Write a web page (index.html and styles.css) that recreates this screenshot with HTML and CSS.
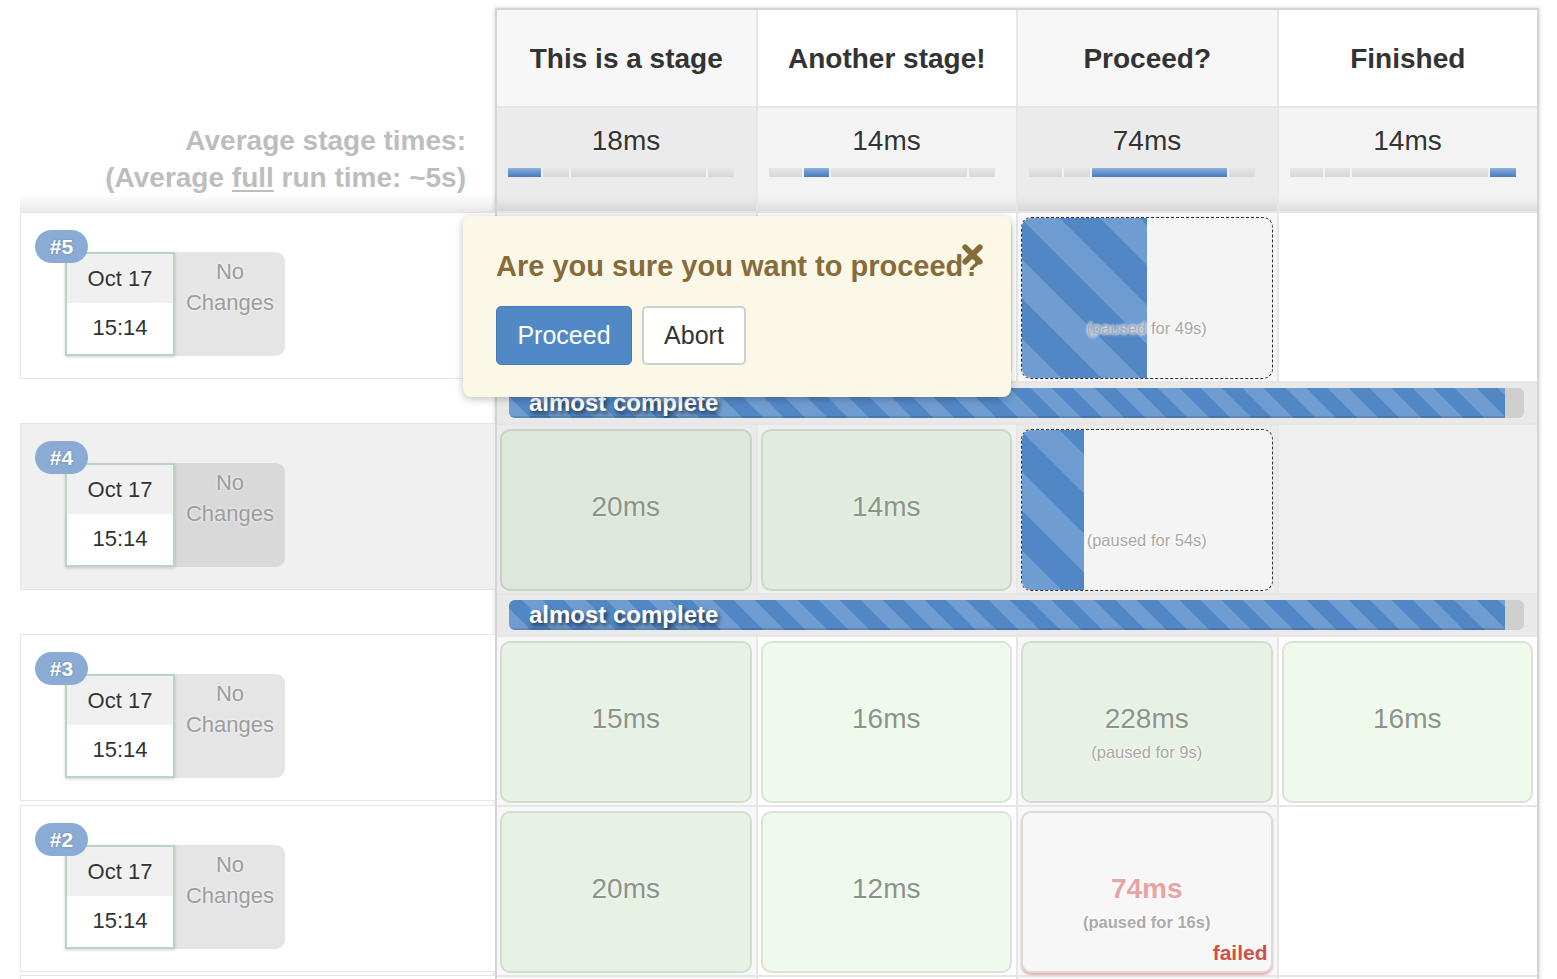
FILE: index.html
```html
<!DOCTYPE html>
<html>
<head>
<meta charset="utf-8">
<title>Stage View</title>
<link rel="stylesheet" href="styles.css">
</head>
<body>
<div class="view">
  <div class="left">
    <div class="avg-label">Average stage times:<br>(Average <u>full</u> run time: ~5s)</div>

    <div class="build">
      <span class="badge">#5</span>
      <div class="stamp">
        <div class="date"><div class="day">Oct 17</div><div class="time">15:14</div></div>
        <div class="changes">No<br>Changes</div>
      </div>
    </div>
    <div class="gap-tall"></div>

    <div class="build hover">
      <span class="badge">#4</span>
      <div class="stamp">
        <div class="date"><div class="day">Oct 17</div><div class="time">15:14</div></div>
        <div class="changes">No<br>Changes</div>
      </div>
    </div>
    <div class="gap-tall"></div>

    <div class="build">
      <span class="badge">#3</span>
      <div class="stamp">
        <div class="date"><div class="day">Oct 17</div><div class="time">15:14</div></div>
        <div class="changes">No<br>Changes</div>
      </div>
    </div>
    <div class="gap-small"></div>

    <div class="build">
      <span class="badge">#2</span>
      <div class="stamp">
        <div class="date"><div class="day">Oct 17</div><div class="time">15:14</div></div>
        <div class="changes">No<br>Changes</div>
      </div>
    </div>
    <div class="gap-tiny"></div>
    <div class="build"></div>
  </div>

  <div class="stages">
    <div class="hcell odd">This is a stage</div>
    <div class="hcell">Another stage!</div>
    <div class="hcell odd">Proceed?</div>
    <div class="hcell">Finished</div>

    <div class="acell odd">
      <div class="avg-time">18ms</div>
      <div class="mini"><span class="seg on" style="flex-grow:18"></span><span class="seg" style="flex-grow:14"></span><span class="seg" style="flex-grow:74"></span><span class="seg" style="flex-grow:14"></span></div>
    </div>
    <div class="acell">
      <div class="avg-time">14ms</div>
      <div class="mini"><span class="seg" style="flex-grow:18"></span><span class="seg on" style="flex-grow:14"></span><span class="seg" style="flex-grow:74"></span><span class="seg" style="flex-grow:14"></span></div>
    </div>
    <div class="acell odd">
      <div class="avg-time">74ms</div>
      <div class="mini"><span class="seg" style="flex-grow:18"></span><span class="seg" style="flex-grow:14"></span><span class="seg on" style="flex-grow:74"></span><span class="seg" style="flex-grow:14"></span></div>
    </div>
    <div class="acell">
      <div class="avg-time">14ms</div>
      <div class="mini"><span class="seg" style="flex-grow:18"></span><span class="seg" style="flex-grow:14"></span><span class="seg" style="flex-grow:74"></span><span class="seg on" style="flex-grow:14"></span></div>
    </div>

    <!-- build #5 -->
    <div class="cell odd"><div class="box ok"><div class="t">18ms</div></div></div>
    <div class="cell"><div class="box ok"><div class="t">14ms</div></div></div>
    <div class="cell odd"><div class="box run"><div class="fill" style="width:50%"></div><div class="p">(paused for 49s)</div></div></div>
    <div class="cell"></div>

    <div class="prow"><div class="bar"><div class="bar-fill" style="width:98.1%">almost complete</div></div></div>

    <!-- build #4 -->
    <div class="cell odd hover"><div class="box ok"><div class="t">20ms</div></div></div>
    <div class="cell hover"><div class="box ok"><div class="t">14ms</div></div></div>
    <div class="cell odd hover"><div class="box run"><div class="fill" style="width:25%"></div><div class="p">(paused for 54s)</div></div></div>
    <div class="cell hover"></div>

    <div class="prow"><div class="bar"><div class="bar-fill" style="width:98.1%">almost complete</div></div></div>

    <!-- build #3 -->
    <div class="cell odd"><div class="box ok"><div class="t">15ms</div></div></div>
    <div class="cell"><div class="box ok"><div class="t">16ms</div></div></div>
    <div class="cell odd"><div class="box ok"><div class="t">228ms</div><div class="p">(paused for 9s)</div></div></div>
    <div class="cell"><div class="box ok"><div class="t">16ms</div></div></div>

    <!-- build #2 -->
    <div class="cell odd"><div class="box ok"><div class="t">20ms</div></div></div>
    <div class="cell"><div class="box ok"><div class="t">12ms</div></div></div>
    <div class="cell odd"><div class="box fail"><div class="t">74ms</div><div class="p">(paused for 16s)</div><span class="failed">failed</span></div></div>
    <div class="cell"></div>

    <!-- build #1 -->
    <div class="cell odd"><div class="box ok"></div></div>
    <div class="cell"><div class="box ok"></div></div>
    <div class="cell odd"><div class="box ok"></div></div>
    <div class="cell"><div class="box ok"></div></div>
  </div>

  <div class="popup">
    <h2 class="popup-title">Are you sure you want to proceed?</h2>
    <svg class="close" viewBox="0 0 24 24" width="25" height="25"><path d="M5 5 L19 19 M19 5 L5 19" stroke="#866b3b" stroke-width="5.5" stroke-linecap="round" fill="none"/></svg>
    <div class="actions">
      <button class="btn btn-primary">Proceed</button>
      <button class="btn btn-default">Abort</button>
    </div>
  </div>
</div>
</body>
</html>
```

FILE: styles.css
```css
* { box-sizing: border-box; }
html, body { margin: 0; padding: 0; background: #fff; }
body { font-family: "Liberation Sans", Arial, Helvetica, sans-serif; color: #333; }

.view {
  position: relative;
  display: flex;
  align-items: flex-start;
  width: 1557px;
  height: 979px;
  padding: 8px 0 0 20px;
  overflow: hidden;
}

/* ---------- left column ---------- */
.left {
  width: 475px;
  flex: none;
  padding-top: 100px;
  display: flex;
  flex-direction: column;
}
.avg-label {
  height: 104px;
  padding: 14px 29px 0 0;
  text-align: right;
  font-weight: bold;
  font-size: 28px;
  line-height: 37px;
  color: #bdbdbd;
  background: linear-gradient(to bottom, #fff 0, #fff 86px, #e9e9e9 104px);
}
.avg-label u { text-decoration-thickness: 2px; text-underline-offset: 3px; }

.build {
  position: relative;
  height: 167px;
  flex: none;
  border: 1px solid #e6e6e6;
  border-right: 0;
  padding: 39px 0 0 44px;
  background: #fff;
}
.build.hover { background: #f0f0f0; border-color: #e4e4e4; }
.gap-tall { height: 44px; flex: none; }
.gap-small { height: 4px; flex: none; }
.gap-tiny { height: 3px; flex: none; }

.badge {
  position: absolute;
  left: 14px;
  top: 17px;
  width: 53px;
  height: 33px;
  border-radius: 17px;
  background: #8aabd3;
  color: #fff;
  font-weight: bold;
  font-size: 21px;
  line-height: 33px;
  text-align: center;
  text-shadow: 0 0 2px rgba(0,0,0,.25);
  z-index: 2;
}
.stamp { display: flex; }
.date {
  width: 110px;
  height: 104px;
  border: 2px solid #b8d4c2;
  box-shadow: 0 1px 3px rgba(0,0,0,.18);
  font-size: 22px;
  text-align: center;
  color: #333;
  display: flex;
  flex-direction: column;
  background: #fff;
  position: relative;
  z-index: 1;
}
.day { height: 49px; line-height: 50px; background: #f0f0f0; text-shadow: 0 0 3px #fff; }
.time { flex: 1; line-height: 50px; }
.changes {
  width: 110px;
  height: 104px;
  background: #e5e5e5;
  border-radius: 0 9px 9px 0;
  color: #9c9c9c;
  font-size: 22px;
  line-height: 31px;
  text-align: center;
  padding-top: 4px;
  text-shadow: 0 0 3px #fff;
}
.build.hover .changes { background: #d9d9d9; }

/* ---------- stage table ---------- */
.stages {
  width: 1044px;
  flex: none;
  display: grid;
  grid-template-columns: repeat(4, 1fr);
  gap: 2px;
  background: #e6e6e6;
  border: 2px solid #d4d4d4;
  border-bottom: 0;
  box-shadow: 0 0 4px rgba(0,0,0,.2);
}
.hcell {
  height: 96px;
  display: flex;
  align-items: center;
  justify-content: center;
  padding-top: 2px;
  font-weight: bold;
  font-size: 28px;
  color: #333;
  background: #fff;
}
.hcell.odd { background: #f7f7f7; }

.acell {
  height: 103px;
  padding: 15px 0 0 11px;
  background: #f3f3f3;
  box-shadow: inset 0 -16px 12px -10px rgba(0,0,0,.10);
}
.acell.odd { background: #ebebeb; }
.avg-time {
  width: 236px;
  text-align: center;
  font-size: 28px;
  line-height: 36px;
  color: #333;
  text-shadow: 0 0 3px #fff;
}
.mini {
  margin-top: 9px;
  width: 226px;
  height: 9px;
  display: flex;
  gap: 2px;
  background: #f2f2f2;
}
.seg {
  flex-basis: 0;
  height: 100%;
  background: linear-gradient(#e6e6e6, #d8d8d8);
}
.seg.on { background: linear-gradient(#92b2db, #6490cc 55%, #4b7cbf); }

.cell {
  height: 168px;
  padding: 4px 4px 2px 3px;
  background: #fff;
}
.cell.odd { background: #f7f7f7; }
.cell.hover { background: #f0f0f0; }
.cell.odd.hover { background: #ebebeb; }

.box {
  position: relative;
  height: 100%;
  border-radius: 10px;
  border: 2px solid rgba(0,0,0,.09);
  text-align: center;
  padding-top: 58px;
  overflow: hidden;
}
.box.ok { background: rgba(95,195,65,.10); }
.t {
  position: relative;
  font-size: 28px;
  line-height: 36px;
  color: #8b948a;
  text-shadow: 0 0 3px #fff;
}
.p {
  position: relative;
  font-size: 16.5px;
  line-height: 30px;
  color: #a8a8a8;
  text-shadow: 0 0 3px #fff, 0 0 3px #fff;
}
.box.run {
  border: 1px dashed #333;
  background: #f4f4f4;
  padding-top: 95px;
}
.fill {
  position: absolute;
  left: 0;
  top: 0;
  bottom: 0;
  background: repeating-linear-gradient(45deg, #6f9dd2 0 28px, #5287c6 28px 56px);
}
.box.fail {
  background: #f7f7f7;
  border: 2px solid #dadada;
  box-shadow: 0 2px 2px rgba(217,83,79,.45);
}
.box.fail .t { font-weight: bold; color: #e6a4a4; }
.box.fail .p { font-weight: bold; color: #ababab; }
.failed {
  position: absolute;
  right: 3px;
  bottom: 6px;
  font-weight: bold;
  font-size: 21px;
  line-height: 24px;
  color: #d24f4c;
}

.prow {
  grid-column: 1 / -1;
  height: 40px;
  padding: 5px 13px 5px 12px;
  background: #e9e9e9;
}
.bar {
  height: 30px;
  border-radius: 6px;
  background: linear-gradient(to right, #c9c9c9, #bcbcbc 60%, #cfcfcf);
  overflow: hidden;
}
.bar-fill {
  height: 100%;
  padding-left: 20px;
  background: repeating-linear-gradient(45deg, #6f9dd2 0 15px, #5287c6 15px 30px);
  box-shadow: inset 0 -2px 0 rgba(0,0,0,.12);
  color: #fff;
  font-weight: bold;
  font-size: 24px;
  line-height: 29px;
  white-space: nowrap;
  text-shadow: 2px 3px 4px rgba(0,0,0,.65);
}

/* ---------- popup ---------- */
.popup {
  position: absolute;
  left: 463px;
  top: 216px;
  width: 548px;
  height: 181px;
  padding: 32px 30px 0 33px;
  background: #fcf8e7;
  border-radius: 8px;
  box-shadow: 0 2px 8px rgba(0,0,0,.25);
  z-index: 5;
}
.popup-title {
  margin: 0;
  font-size: 29px;
  line-height: 36px;
  font-weight: bold;
  color: #866b3b;
  white-space: nowrap;
}
.close {
  position: absolute;
  left: 497px;
  top: 26px;
}
.actions {
  margin-top: 22px;
  display: flex;
  gap: 10px;
}
.btn {
  height: 59px;
  border-radius: 5px;
  font-family: "Liberation Sans", Arial, sans-serif;
  font-size: 25px;
  padding: 0;
  cursor: pointer;
}
.btn-primary {
  width: 136px;
  background: #5189c6;
  border: 1px solid #467bb7;
  color: #fff;
}
.btn-default {
  width: 104px;
  background: #fff;
  border: 2px solid #cfcfcf;
  color: #333;
}
```
